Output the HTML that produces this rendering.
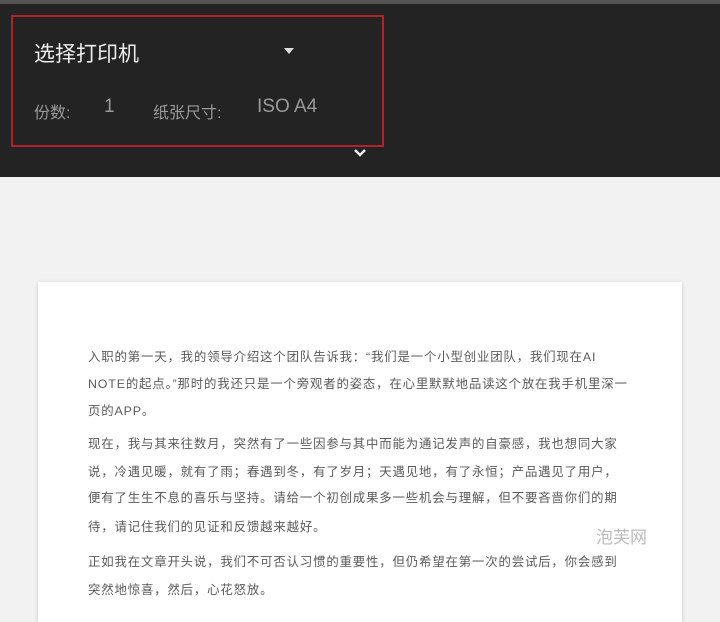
<!DOCTYPE html>
<html><head><meta charset="utf-8"><style>
body{margin:0;width:720px;height:609px;overflow:hidden;background:#f2f2f2;font-family:"Liberation Sans","Noto Sans CJK SC",sans-serif;position:relative}
.top{position:absolute;left:0;top:0;width:720px;height:177px;background:#232323;border-top:4px solid #555;box-sizing:border-box}
.box{position:absolute;left:11px;top:11px;width:373px;height:132px;border:2px solid #b3222a;box-sizing:border-box}
.t{position:absolute;left:34px;top:34px;color:#eee;font-size:21px}
.s{position:absolute;top:95px;color:#9a9a9a;font-size:16px}
.paper{position:absolute;left:38px;top:282px;width:644px;height:340px;background:#fff;box-shadow:0 1px 4px rgba(0,0,0,.18)}
.l{position:absolute;left:50px;color:#5a5a5a;font-size:12.4px;line-height:16px;white-space:nowrap;letter-spacing:.85px}
.wm{position:absolute;left:596px;top:523px;color:#bbb;font-size:17px}
</style></head><body>
<div class="top">
<div class="box"></div>
<div class="t">选择打印机</div>
<svg style="position:absolute;left:284px;top:44px" width="10" height="6"><path d="M0 0h10L5 6z" fill="#ddd"/></svg>
<div class="s" style="left:34px">份数:</div>
<div class="s" style="left:104px;font-size:19px;top:92px">1</div>
<div class="s" style="left:153px">纸张尺寸:</div>
<div class="s" style="left:257px;font-size:19px;top:92px">ISO A4</div>
<svg style="position:absolute;left:353px;top:144px" width="14" height="10"><path d="M2 2l5 5 5-5" stroke="#eee" stroke-width="2.5" fill="none"/></svg>
</div>
<div class="paper">
<div class="l" style="top:67px">入职的第一天，我的领导介绍这个团队告诉我：“我们是一个小型创业团队，我们现在AI</div>
<div class="l" style="top:94px">NOTE的起点。”那时的我还只是一个旁观者的姿态，在心里默默地品读这个放在我手机里深一</div>
<div class="l" style="top:121px">页的APP。</div>
<div class="l" style="top:154px">现在，我与其来往数月，突然有了一些因参与其中而能为通记发声的自豪感，我也想同大家</div>
<div class="l" style="top:182px">说，冷遇见暖，就有了雨；春遇到冬，有了岁月；天遇见地，有了永恒；产品遇见了用户，</div>
<div class="l" style="top:208px">便有了生生不息的喜乐与坚持。请给一个初创成果多一些机会与理解，但不要吝啬你们的期</div>
<div class="l" style="top:237px">待，请记住我们的见证和反馈越来越好。</div>
<div class="l" style="top:272px">正如我在文章开头说，我们不可否认习惯的重要性，但仍希望在第一次的尝试后，你会感到</div>
<div class="l" style="top:300px">突然地惊喜，然后，心花怒放。</div>
</div>
<div class="wm">泡芙网</div>
</body></html>
